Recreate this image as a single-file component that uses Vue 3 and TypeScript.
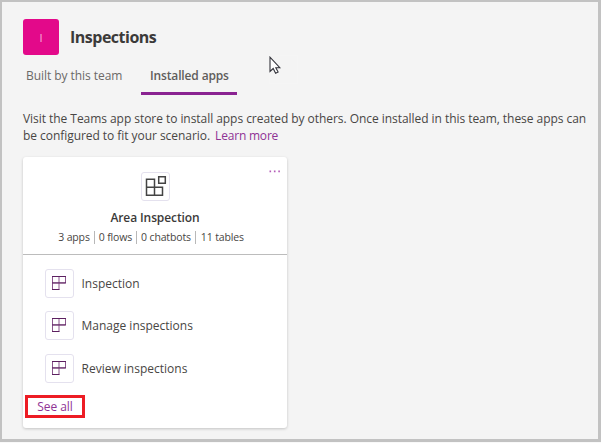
<script setup lang="ts">
const stats: string[] = ['3 apps', '0 flows', '0 chatbots', '11 tables']
const apps: string[] = ['Inspection', 'Manage inspections', 'Review inspections']
</script>

<template>
  <main class="page">
    <header class="header">
      <div class="avatar">I</div>
      <h1 class="title">Inspections</h1>
    </header>

    <nav class="tabs">
      <a class="tab">Built by this team</a>
      <a class="tab active">Installed apps</a>
    </nav>

    <p class="intro">
      <span class="line">Visit the Teams app store to install apps created by others. Once installed in this team, these apps can</span>
      <span class="line">be configured to fit your scenario. <a class="link">Learn more</a></span>
    </p>

    <section class="card">
      <div class="card-head">
        <svg class="more" width="12" height="3" viewBox="0 0 12 3">
          <path d="M.5 .5h1.6v1.7H.5zM4.9 .5h1.6v1.7H4.9zM9.3 .5h1.6v1.7H9.3z" fill="#b45cb8" />
        </svg>
        <div class="tile">
          <svg width="27" height="27" viewBox="0 0 27 27" fill="none" stroke="#444" stroke-width="1.5">
            <path d="M4.5 6.2h8v16h-8zM4.5 14.2h16v8h-16M12.5 14v8M16.7 3.7h6.6v6.6h-6.6z" />
          </svg>
        </div>
        <h2 class="card-title">Area Inspection</h2>
        <div class="stats">
          <span v-for="s in stats" :key="s" class="stat">{{ s }}</span>
        </div>
      </div>
      <ul class="list">
        <li v-for="app in apps" :key="app" class="item">
          <div class="tile">
            <svg width="27" height="27" viewBox="0 0 27 27" fill="none" stroke="#8b588e">
              <path d="M6.5 6.5h13v6.5h-13zM6.5 13v6.5h6.5v-13" />
              <path d="M6 12.9h14M6 19.5h7.5M6 6.5h14" stroke="#5c2060" />
            </svg>
          </div>
          <span class="name">{{ app }}</span>
        </li>
      </ul>
      <a class="see-all">See all</a>
    </section>

    <div class="pointer">
      <svg width="14" height="19" viewBox="0 0 14 19">
        <path d="M1 1.2v14.3l3.2-3 2.4 4.8 2.5-1.2-2.3-4.4h4z" fill="#fff" stroke="#33333b" stroke-width="1.1" />
      </svg>
    </div>
  </main>
</template>

<style>
body {
  background: #f9f9f9;
}
</style>

<style scoped>
.page {
  box-sizing: border-box;
  position: relative;
  width: 601px;
  height: 442px;
  padding: 17px 0 0 21px;
  border: solid #c2c2c2;
  border-width: 2px 3px 3px 2px;
  background: #f4f4f4;
  color: #484644;
  font-family: "Open Sans", "Noto Sans", sans-serif;
  font-size: 12px;
  letter-spacing: -0.05px;
  overflow: hidden;
}
.header {
  display: flex;
  align-items: center;
  height: 36px;
}
.avatar {
  width: 36px;
  height: 36px;
  border-radius: 3px;
  background: #e3098a;
  color: #f7b5db;
  font-size: 11px;
  line-height: 38px;
  text-align: center;
}
.title {
  margin: 0 0 0 11px;
  font-size: 16px;
  font-weight: 700;
  line-height: 36px;
  letter-spacing: -0.5px;
  color: #3b3a39;
}
.tabs {
  display: flex;
  height: 40px;
  color: #6b6967;
}
.tab {
  width: 115px;
  padding-left: 3px;
  line-height: 41px;
  white-space: nowrap;
}
.tab.active {
  box-sizing: border-box;
  width: 96px;
  padding-left: 9px;
  border-bottom: 3px solid #8a2391;
  font-weight: 600;
  letter-spacing: -0.14px;
  color: #5f5d5b;
}
.intro {
  margin: 15px 0 0;
}
.line {
  display: block;
  height: 17px;
  line-height: 17px;
  white-space: nowrap;
}
.link,
.see-all {
  color: #8f3295;
}
.link {
  margin-left: 2px;
  letter-spacing: -0.2px;
}
.card {
  width: 264px;
  height: 271px;
  margin-top: 13px;
  border-radius: 3px;
  background: #fff;
  box-shadow: 0 1px 3px rgba(0, 0, 0, 0.2);
}
.card-head {
  position: relative;
  box-sizing: border-box;
  display: flex;
  flex-direction: column;
  align-items: center;
  height: 98px;
  padding-top: 15px;
  border-bottom: 1px solid #bcbcbc;
}
.more {
  position: absolute;
  top: 13px;
  right: 6px;
}
.tile {
  box-sizing: border-box;
  display: flex;
  flex: none;
  align-items: center;
  justify-content: center;
  width: 29px;
  height: 29px;
  border: 1px solid #e4e1ee;
  border-radius: 3px;
}
.card-title {
  margin: 8px 0 0;
  font-size: 12px;
  font-weight: 600;
  line-height: 18px;
  letter-spacing: -0.1px;
  color: #3b3a39;
}
.stats {
  display: flex;
  align-items: center;
  margin: 4px 8px 0 0;
  font-size: 10.5px;
  line-height: 13px;
  letter-spacing: -0.15px;
  white-space: nowrap;
}
.stat + .stat {
  margin-left: 4px;
  padding-left: 4px;
  border-left: 1px solid #b8b8b8;
}
.stat:last-child {
  padding-left: 5px;
}
.list {
  display: flex;
  flex-direction: column;
  gap: 13.4px;
  margin: 0;
  padding: 14px 0 0 22px;
  list-style: none;
}
.item {
  display: flex;
  align-items: center;
  gap: 7.5px;
  letter-spacing: 0;
}
.see-all {
  display: block;
  box-sizing: border-box;
  width: 60px;
  height: 23px;
  margin: 12.2px 0 0 2px;
  border: 3px solid #ed1c24;
  line-height: 17px;
  text-align: center;
}
.pointer {
  position: absolute;
  left: 267px;
  top: 53px;
  box-sizing: border-box;
  width: 29px;
  height: 29px;
  border: 1px solid #f5f5f5;
}
.pointer svg {
  display: block;
  margin-left: -1px;
}
</style>
